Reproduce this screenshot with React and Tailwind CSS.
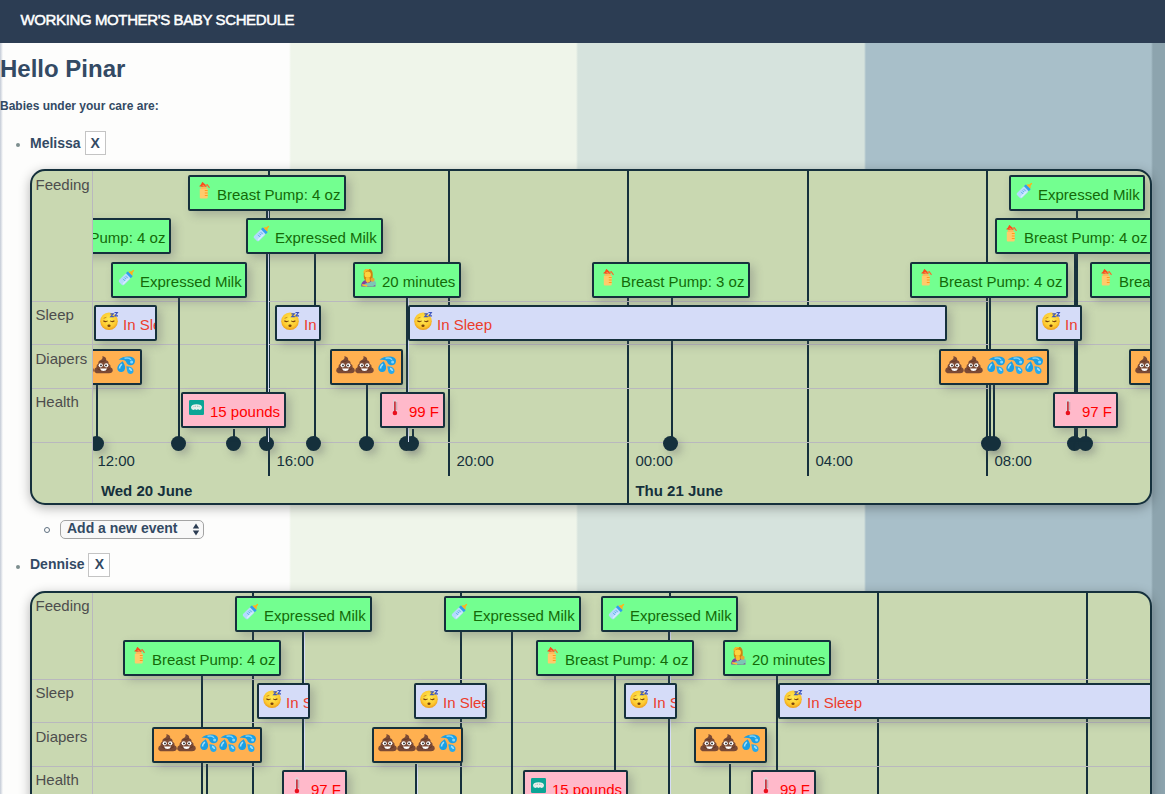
import React from 'react';

/* ---------- icons ---------- */

const PumpIcon = () => (
  <svg viewBox="0 0 19 19" className="block h-[19px] w-[19px] shrink-0">
    <path d="M5.800 6.800h7.900v8.800a1 1 0 0 1-1 1H6.800a1 1 0 0 1-1-1z" fill="#ffca6b" />
    <path d="M6.800 5h5.800v2H6.800z" fill="#ffb95a" />
    <path d="M10.800 8.500h2.900M10.800 11h2.900M10.800 13.500h2.900" stroke="#ff9a1f" strokeWidth="1.100" />
    <path d="M8.300-.200l3 2.600 1.500 2.400H7.600l-2.600-.600 1.800-1.400z" fill="#fb4d1c" />
    <path d="M11 3.800l2.300-1 2.200 3" stroke="#fb6a2c" strokeWidth="1.100" fill="none" />
    <path d="M8.600 3.500l2 .8" stroke="#ffb070" strokeWidth="0.800" />
  </svg>
);

const BottleIcon = () => (
  <svg viewBox="0 0 19 19" className="block h-[19px] w-[19px] shrink-0">
    <g transform="translate(0 -0.500) rotate(45 9.500 9)">
      <rect x="6" y="6" width="7" height="11.500" rx="1.800" fill="#b4dafd" />
      <path d="M11.600 7.500v8.500" stroke="#d9eeff" strokeWidth="1.300" />
      <path d="M8 8.600h3M8 10.500h2.200M8 12.400h3" stroke="#5aa7ea" strokeWidth="0.900" />
      <rect x="6" y="3.600" width="7" height="2.800" rx="0.600" fill="#329cf0" />
      <path d="M6.900 3.600q.200-1.800 1.600-2l.4-3h1.200l.4 3q1.400.2 1.600 2z" fill="#ffb01c" />
    </g>
  </svg>
);

const NursingIcon = () => (
  <svg viewBox="0 0 19 19" className="block h-[19px] w-[19px] shrink-0">
    <path d="M2.200 17.500q-.300-5 4.200-6.500h5q4.900 1 5.100 6.500z" fill="#84409c" />
    <path d="M5 9.500Q3.600-.200 9-.600q5.600.200 4.600 8.900.600 1.800-.600 3.300-3.400 1.400-5.400.4T5 9.500z" fill="#cf8410" />
    <path d="M5 3.600Q6.200 0 10 .400" stroke="#f5bb2a" strokeWidth="1.800" fill="none" />
    <circle cx="8.700" cy="5.600" r="3.200" fill="#ffd23e" />
    <path d="M7 8.600h3.500l.600 4-2.400 1.400-2-1.800z" fill="#f9bf30" />
    <path d="M4.700 16.800q1-3.300 5-2.800l4.500-3q3.200 1.200 3 4.500l-3.500 1.700z" fill="#7cc7b4" />
    <circle cx="13.600" cy="10.700" r="2" fill="#e9a534" />
    <path d="M3.200 15.800l5 1.300" stroke="#fcc130" strokeWidth="1.500" />
  </svg>
);

const SleepIcon = () => (
  <svg viewBox="0 0 19 19" className="block h-[19px] w-[19px] shrink-0">
    <defs>
      <radialGradient id="face" cx="50%" cy="40%" r="60%">
        <stop offset="0" stopColor="#ffec55" />
        <stop offset="0.700" stopColor="#fdca30" />
        <stop offset="1" stopColor="#ec9a1a" />
      </radialGradient>
    </defs>
    <circle cx="9" cy="9.300" r="8.800" fill="url(#face)" />
    <path d="M3.400 8.800q2 1.500 4.200.1M10.200 8.900q2 1.400 4.200-.1" stroke="#7a430c" strokeWidth="1.100" fill="none" />
    <path d="M3.600 6.300l2.800-1" stroke="#b87a18" strokeWidth="0.800" />
    <ellipse cx="9" cy="13.800" rx="1.600" ry="1.300" fill="#7a430c" />
    <path d="M10.400 1.800h2.800l-2.400 2.800h3M14.500.300h3l-2.500 3.500h3" stroke="#3f57bd" strokeWidth="1.200" fill="none" />
  </svg>
);

const PoopIcon = () => (
  <svg viewBox="0 0 19 19" className="block h-[19px] w-[19px] shrink-0">
    <path d="M8.400 0q4.200 1 3.800 4.300 2.700.600 2.400 3.500 2.400.900 2 3.500 2.300.800 2.200 3-.200 2.900-3.800 2.900H4Q.400 17.200.200 14.400q0-2.300 2.300-3.100-.300-2.700 1.900-3.700Q4 4.900 6.500 4.200 9.200 3.100 8.400 0z" fill="#7b4a35" />
    <path d="M6.300 5.200q3.500.800 5.300-.800M3.400 12.700q6.100 4 12.600-.100" stroke="#5d3325" strokeWidth="0.800" fill="none" />
    <circle cx="6.700" cy="9.300" r="2.100" fill="#fff" />
    <circle cx="12.300" cy="9.300" r="2.100" fill="#fff" />
    <circle cx="7" cy="9.400" r="0.900" fill="#222" />
    <circle cx="12" cy="9.400" r="0.900" fill="#222" />
    <path d="M6 12.400h7q-.800 2.500-3.500 2.500T6 12.400z" fill="#fff" />
  </svg>
);

const DropsIcon = () => (
  <svg viewBox="0 0 19 19" className="block h-[19px] w-[19px] shrink-0">
    <path d="M1.600 3.800Q6 .200 12.500.600 18 1.200 18 5q-.400 4.300-4.500 4.300-3.600-.300-4.300-3.300Q8 3 1.600 3.800z" fill="#1b9fe4" />
    <path d="M5.600 5.200Q8.600 9.500 8 12.700 7 16.300 4 16 .200 15.500.300 11.900.800 8.500 5.600 5.200z" fill="#1b9fe4" />
    <path d="M9.300 10.200q5-.200 7 3.300 1 3.700-2.600 4.600-3.100 0-3.500-3z" fill="#28a9ea" />
    <path d="M7.500 2.300q5-1 6.500 1.500" stroke="#7ed2fb" strokeWidth="1.500" fill="none" />
    <path d="M4.800 8q-2.400 2.500-2.300 4.500M12 12.400q2.300.800 2.400 2.600" stroke="#9fdffc" strokeWidth="1.700" fill="none" />
    <circle cx="14.600" cy="6" r="1.500" fill="#8bd8fb" />
  </svg>
);

const ScaleIcon = () => (
  <svg viewBox="0 0 19 19" className="block h-[19px] w-[19px] shrink-0">
    <rect x="2" y="1" width="15" height="15" rx="1.200" fill="#0ba596" />
    <path d="M4 8.300q.300-3 5.500-3t5.500 3q0 2.400-2.500 2.700l-1.500-.700-1.500.700-1.500-.700-1.500.700Q4 10.700 4 8.300z" fill="#e9f1ed" />
    <path d="M6 8.300l1-1M8.200 8l.300-1.300M10.800 8l-.300-1.300M13 8.300l-1-1" stroke="#8aa8a2" strokeWidth="0.700" />
  </svg>
);

const ThermoIcon = () => (
  <svg viewBox="0 0 19 19" className="block h-[19px] w-[19px] shrink-0">
    <rect x="7.200" y="0.300" width="3.400" height="14" rx="1.700" fill="#ddd3da" />
    <path d="M8.900 2.600V13" stroke="#c9303a" strokeWidth="1.700" />
    <circle cx="8.900" cy="14" r="2.300" fill="#ea0f1c" />
    <path d="M10 4h1.300M10 6h1.300M10 8h1.300M10 10h1.300" stroke="#8d8490" strokeWidth="0.700" />
  </svg>
);

/* ---------- events ---------- */

const kinds = {
  pump: { box: 'bg-[#73ff90] text-[#146a08]', Icon: PumpIcon, width: 158 },
  milk: { box: 'bg-[#73ff90] text-[#146a08]', Icon: BottleIcon, width: 137 },
  nurse: { box: 'bg-[#73ff90] text-[#146a08]', Icon: NursingIcon, width: 108 },
  sleep: { box: 'bg-[#d5dcf8] text-[#ec3d2c]', Icon: SleepIcon, width: 46 },
  diaper: { box: 'bg-[#ffb050]', width: 73 },
  weight: { box: 'bg-[#ffb9ca] text-[#ff0000]', Icon: ScaleIcon, width: 105 },
  temp: { box: 'bg-[#ffb9ca] text-[#ff0000]', Icon: ThermoIcon, width: 65 },
};

function EventBox({ kind, x, y, w, text, poops = 0, drops = 0 }) {
  const { box, Icon, width } = kinds[kind];
  return (
    <div
      className={`absolute flex h-9 overflow-hidden whitespace-nowrap rounded-[2px] border-2 border-[#15303c] pl-1 pt-[5px] text-[15px] shadow-[4px_4px_10px_rgba(90,90,100,0.32)] ${box}`}
      style={{ left: x - 93, top: y, width: w || width }}
    >
      {kind === 'diaper' ? (
        <div className="flex">
          {Array.from({ length: poops }, (_, i) => <PoopIcon key={i} />)}
          <span className="w-1" />
          {Array.from({ length: drops }, (_, i) => <DropsIcon key={i} />)}
        </div>
      ) : (
        <>
          <Icon />
          <span className="ml-1 mt-[4px] leading-[18px]">{text}</span>
        </>
      )}
    </div>
  );
}

function Timeline({ rows, ticks, stems, dots, events }) {
  const end = rows.reduce((a, r) => a + r.height, 0);
  return (
    <div className="flex h-[336px] w-[1122px] overflow-hidden rounded-[15px] border-2 border-[#15303c] bg-[#c9d8b1] shadow-[0_3px_12px_rgba(0,0,0,0.3)]">
      <div className="w-[61px] shrink-0 border-r border-[#b9b8be]">
        {rows.map((r) => (
          <div
            key={r.name}
            className="border-b border-[#b9b8be] pl-[3.5px] text-[15px] leading-[22px] text-[#4d4d4d]"
            style={{ height: r.height, paddingTop: r.pad }}
          >
            {r.name}
          </div>
        ))}
      </div>
      <div className="relative grow overflow-hidden">
        {ticks.map((t) => (
          <div
            key={t.x}
            className="absolute top-0 w-[2px] bg-[#15303c]"
            style={{ left: t.x - 93, height: t.day ? 332 : 305 }}
          />
        ))}
        <div className="relative">
          {rows.map((r) => (
            <div key={r.name} className="border-b border-[#b9b8be]" style={{ height: r.height }} />
          ))}
        </div>
        {dots.map((d) => (
          <div
            key={d}
            className="absolute h-[15px] w-[15px] rounded-full bg-[#15303c] shadow-[4px_4px_9px_rgba(90,90,100,0.35)]"
            style={{ left: d - 93, top: end - 7 }}
          />
        ))}
        {stems.map(([x, top, light, w]) => (
          <div
            key={`${x}-${top}`}
            className={`absolute bg-[#15303c] ${light ? 'border-r border-[#d5dcf5]' : ''}`}
            style={{ left: x - 93, top, height: end - 1 - top, width: (w || 2) + (light ? 1 : 0) }}
          />
        ))}
        {events.map((e) => <EventBox key={`${e.x}-${e.y}`} {...e} />)}
        {ticks.concat([{ x: 89, label: '12:00', day: 'Wed 20 June' }]).map((t) => (
          <div
            key={t.x}
            className="absolute whitespace-nowrap text-[15px] leading-[20px] text-[#15303c]"
            style={{ left: t.x - 93 + 8.4, top: end + 8 }}
          >
            <div>{t.label}</div>
            {t.day && <div className={`mt-[10px] font-bold ${t.x === 89 ? 'ml-[3.5px]' : ''}`}>{t.day}</div>}
          </div>
        ))}
      </div>
    </div>
  );
}

const melissa = {
  rows: [
    { name: 'Feeding', height: 131, pad: 3 },
    { name: 'Sleep', height: 43, pad: 2 },
    { name: 'Diapers', height: 44, pad: 3 },
    { name: 'Health', height: 54, pad: 2 },
  ],
  ticks: [
    { x: 268, label: '16:00' },
    { x: 448, label: '20:00' },
    { x: 627, label: '00:00', day: 'Thu 21 June' },
    { x: 807, label: '04:00' },
    { x: 986, label: '08:00' },
  ],
  stems: [
    [96, 214], [178, 127], [233, 258], [266, 40, true], [314, 83], [366, 214],
    [406, 127, true], [412, 258], [671, 127], [989, 127], [993, 214],
    [1074, 83, false, 4], [1076, 40], [1085, 258],
  ],
  dots: [89, 171, 226, 259, 306, 359, 399, 404, 663, 981, 986, 1067, 1078],
  events: [
    { kind: 'pump', x: 188, y: 4, text: 'Breast Pump: 4 oz' },
    { kind: 'milk', x: 1009, y: 4, w: 136, text: 'Expressed Milk' },
    { kind: 'pump', x: 13, y: 47, text: 'Breast Pump: 4 oz' },
    { kind: 'milk', x: 246, y: 47, text: 'Expressed Milk' },
    { kind: 'pump', x: 995, y: 47, text: 'Breast Pump: 4 oz' },
    { kind: 'milk', x: 111, y: 91, w: 136, text: 'Expressed Milk' },
    { kind: 'nurse', x: 353, y: 91, text: '20 minutes' },
    { kind: 'pump', x: 592, y: 91, text: 'Breast Pump: 3 oz' },
    { kind: 'pump', x: 910, y: 91, text: 'Breast Pump: 4 oz' },
    { kind: 'pump', x: 1090, y: 91, text: 'Breast Pump: 4 oz' },
    { kind: 'sleep', x: 94, y: 134, w: 63, text: 'In Sleep' },
    { kind: 'sleep', x: 275, y: 134, text: 'In' },
    { kind: 'sleep', x: 408, y: 134, w: 539, text: 'In Sleep' },
    { kind: 'sleep', x: 1036, y: 134, text: 'In' },
    { kind: 'diaper', x: 69, y: 178, poops: 2, drops: 1 },
    { kind: 'diaper', x: 330, y: 178, poops: 2, drops: 1 },
    { kind: 'diaper', x: 939, y: 178, w: 110, poops: 2, drops: 3 },
    { kind: 'diaper', x: 1129, y: 178, poops: 2, drops: 1 },
    { kind: 'weight', x: 181, y: 221, text: '15 pounds' },
    { kind: 'temp', x: 380, y: 221, text: '99 F' },
    { kind: 'temp', x: 1053, y: 221, text: '97 F' },
  ],
};

const dennise = {
  rows: [
    { name: 'Feeding', height: 87, pad: 2 },
    { name: 'Sleep', height: 43, pad: 2 },
    { name: 'Diapers', height: 44, pad: 3 },
    { name: 'Health', height: 54, pad: 2 },
  ],
  ticks: [{ x: 252 }, { x: 460 }, { x: 669 }, { x: 877 }, { x: 1086 }],
  stems: [
    [201, 83], [206, 171], [302, 39, true], [415, 171, true], [511, 39],
    [614, 83], [668, 39, true], [729, 171], [776, 83],
  ],
  dots: [],
  events: [
    { kind: 'milk', x: 235, y: 3, text: 'Expressed Milk' },
    { kind: 'milk', x: 444, y: 3, text: 'Expressed Milk' },
    { kind: 'milk', x: 601, y: 3, text: 'Expressed Milk' },
    { kind: 'pump', x: 123, y: 47, text: 'Breast Pump: 4 oz' },
    { kind: 'pump', x: 536, y: 47, text: 'Breast Pump: 4 oz' },
    { kind: 'nurse', x: 723, y: 47, text: '20 minutes' },
    { kind: 'sleep', x: 257, y: 90, w: 53, text: 'In Sleep' },
    { kind: 'sleep', x: 414, y: 90, w: 73, text: 'In Sleep' },
    { kind: 'sleep', x: 624, y: 90, w: 53, text: 'In Sleep' },
    { kind: 'sleep', x: 778, y: 90, w: 420, text: 'In Sleep' },
    { kind: 'diaper', x: 152, y: 134, w: 110, poops: 2, drops: 3 },
    { kind: 'diaper', x: 372, y: 134, w: 91, poops: 3, drops: 1 },
    { kind: 'diaper', x: 694, y: 134, poops: 2, drops: 1 },
    { kind: 'temp', x: 282, y: 177, text: '97 F' },
    { kind: 'weight', x: 523, y: 177, text: '15 pounds' },
    { kind: 'temp', x: 751, y: 177, text: '99 F' },
  ],
};

function BabyName({ name, className = '' }) {
  return (
    <div className="flex h-[24px] items-center">
      <span className="ml-4 mr-[10px] mt-[3px] h-1 w-1 rounded-full bg-[#7d8e8e]" />
      <span className={`text-[14px] font-bold ${className}`}>{name}</span>
      <button className={`ml-1 flex h-6 items-center justify-center border border-[#c4c4c4] bg-white text-[14px] font-bold ${className ? 'w-[22px] pb-[2px]' : 'w-[21px]'}`}>
        X
      </button>
    </div>
  );
}

export default function App() {
  return (
    <div className="h-[794px] w-[1165px] overflow-hidden bg-[linear-gradient(90deg,#c3cad6_0,#fdfdfc_3px,#fdfdfc_289px,#eff5ea_291px,#eff5ea_576px,#d6e3dd_578px,#d6e3dd_864px,#a8bfc9_866px,#a8bfc9_1151px,#8da4ae_1153px)] font-['Liberation_Sans',Arial,sans-serif] text-[#334a64]">
      <header className="flex h-[43px] items-center bg-[#2c3d53] pb-[3px] pl-[20.5px]">
        <span className="text-[15px] tracking-[-0.38px] text-white [-webkit-text-stroke:0.5px_white]">
          WORKING MOTHER'S BABY SCHEDULE
        </span>
      </header>
      <h1 className="mt-[11px] text-[24px] font-bold leading-[30px]">Hello Pinar</h1>
      <h4 className="mt-[14px] text-[12px] font-bold leading-[16px]">Babies under your care are:</h4>
      <div className="mt-[17px]">
        <BabyName name="Melissa" />
        <div className="ml-[30px] mt-[14px]">
          <Timeline {...melissa} />
        </div>
        <div className="mt-[15px] flex h-[19px] items-center">
          <span className="ml-[44px] mr-[10px] mt-[1px] h-[6px] w-[6px] rounded-full border border-[#5f7080]" />
          <div className="flex h-[19px] w-[144px] items-center justify-between rounded-[5px] border border-[#a4a4a4] bg-[#f8f8f8] pb-[2px] pl-[6px] pr-[3px] text-[14px] font-bold leading-[15px]">
            Add a new event
            <svg viewBox="0 0 8 13" className="mt-[2px] h-[13px] w-2" fill="#2c3d53">
              <path d="M4 .5L7.200 5.500H.8zM4 12.500L.8 7.500h6.400z" />
            </svg>
          </div>
        </div>
      </div>
      <div className="mt-[14px]">
        <BabyName name="Dennise" className="mb-[2px]" />
        <div className="ml-[30px] mt-[14px]">
          <Timeline {...dennise} />
        </div>
      </div>
    </div>
  );
}
